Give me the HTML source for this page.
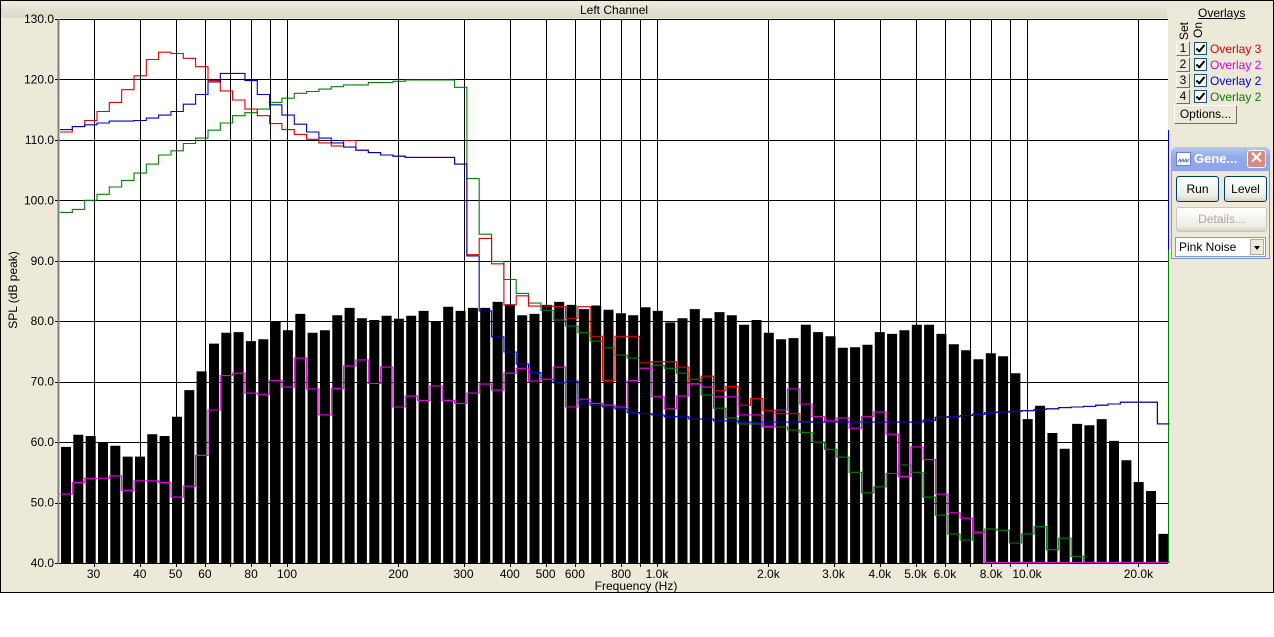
<!DOCTYPE html>
<html><head><meta charset="utf-8">
<style>
html,body{margin:0;padding:0;background:#fff;}
body{width:1274px;height:637px;position:relative;overflow:hidden;font-family:"Liberation Sans",sans-serif;}
#frame{position:absolute;left:0;top:0;width:1272px;height:591px;border:1px solid #000;background:#ECE9D8;}
.t{font-size:12px;fill:#000;font-family:"Liberation Sans",sans-serif;}
.abs{position:absolute;font-size:12px;color:#000;white-space:nowrap;}
.btn{position:absolute;box-sizing:border-box;border:1px solid #003C74;border-radius:3px;background:linear-gradient(#FFFFFF,#ECEBE6 80%,#D6D0C5);font-size:12px;text-align:center;}
.sb{position:absolute;box-sizing:border-box;width:14px;height:15px;border:1px solid;border-color:#fff #716F64 #716F64 #fff;background:#ECE9D8;font-size:12px;line-height:13px;text-align:center;}
.cb{position:absolute;box-sizing:border-box;width:13px;height:13px;border:1px solid #1C5180;background:#fff;}
.cb:after{content:"";position:absolute;left:3px;top:0px;width:3px;height:7px;border:solid #000;border-width:0 2px 2px 0;transform:rotate(40deg);}
</style></head><body>
<div id="frame"></div>
<div style="position:absolute;left:1px;top:1px;width:1166px;height:17px;background:linear-gradient(#EEEBDD,#DEDACA);"></div>
<div class="abs" style="left:580px;top:3px;">Left Channel</div>
<svg id="ch" width="1274" height="637" style="position:absolute;left:0;top:0;"></svg>

<div class="abs" style="left:1198px;top:6px;text-decoration:underline;">Overlays</div>
<div class="abs" style="left:1177px;top:40px;transform:rotate(-90deg);transform-origin:left top;">Set</div>
<div class="abs" style="left:1191px;top:38px;transform:rotate(-90deg);transform-origin:left top;">On</div>
<div class="sb" style="left:1176px;top:41px;">1</div><div class="cb" style="left:1194px;top:42px;"></div><div class="abs" style="left:1210px;top:42px;color:#E00000;">Overlay 3</div>
<div class="sb" style="left:1176px;top:57px;">2</div><div class="cb" style="left:1194px;top:58px;"></div><div class="abs" style="left:1210px;top:58px;color:#E000E0;">Overlay 2</div>
<div class="sb" style="left:1176px;top:73px;">3</div><div class="cb" style="left:1194px;top:74px;"></div><div class="abs" style="left:1210px;top:74px;color:#0000D0;">Overlay 2</div>
<div class="sb" style="left:1176px;top:89px;">4</div><div class="cb" style="left:1194px;top:90px;"></div><div class="abs" style="left:1210px;top:90px;color:#008000;">Overlay 2</div>
<div style="position:absolute;left:1174px;top:105px;width:63px;height:19px;box-sizing:border-box;border:1px solid;border-color:#fff #716F64 #716F64 #fff;font-size:12px;line-height:17px;text-align:center;">Options...</div>

<div style="position:absolute;left:1171px;top:147px;width:99px;height:112px;box-sizing:border-box;border:1px solid #7C93D8;border-top:none;border-radius:6px 6px 0 0;background:#ECE9D8;">
 <div style="position:absolute;left:-1px;top:0;width:99px;height:24px;border-radius:6px 6px 0 0;background:linear-gradient(#B7C7F4,#93ABEC 40%,#8CA4EA);"></div>
 <div style="position:absolute;left:4px;top:5px;width:13px;height:12px;background:#fff;border:1px solid #6A7FC0;"><svg width="13" height="12"><path d="M1 8 L3 5 L4 8 L6 5 L7 8 L9 5 L10 8 L12 5" stroke="#5070c0" fill="none"/></svg></div>
 <div style="position:absolute;left:22px;top:4px;color:#fff;font-size:13px;font-weight:bold;">Gene...</div>
 <div style="position:absolute;left:75px;top:3px;width:19px;height:18px;box-sizing:border-box;border:1px solid #fff;border-radius:3px;background:#D88C7C;color:#fff;font-size:16px;line-height:15px;text-align:center;font-weight:bold;">✕</div>
 <div class="btn" style="left:4px;top:29px;width:43px;height:26px;line-height:24px;">Run</div>
 <div class="btn" style="left:52px;top:29px;width:43px;height:26px;line-height:24px;">Level</div>
 <div class="btn" style="left:4px;top:60px;width:91px;height:25px;line-height:23px;color:#ACA899;border-color:#C9C7BA;">Details...</div>
 <div style="position:absolute;left:3px;top:90px;width:91px;height:20px;box-sizing:border-box;border:1px solid #7F9DB9;background:#fff;font-size:12px;line-height:18px;padding-left:3px;">Pink Noise<div style="position:absolute;right:1px;top:1px;width:14px;height:16px;background:#ECE9D8;border:1px solid #aaa;box-sizing:border-box;"><div style="position:absolute;left:3px;top:6px;border:3px solid transparent;border-top:4px solid #000;"></div></div></div>
</div>

<script>
const svg=document.getElementById('ch');
const NS='http://www.w3.org/2000/svg';
function el(n,a,txt){const e=document.createElementNS(NS,n);for(const k in a)e.setAttribute(k,a[k]);if(txt!=null)e.textContent=txt;svg.appendChild(e);return e;}
const X0=59,X1=1168,Y0=19,Y1=563;
const Y=v=>Y0+(130-v)*6.044;
const X=f=>287+370*(Math.log10(f)-2);
el('rect',{x:X0,y:Y0,width:X1-X0,height:Y1-Y0,fill:'#fff'});
const bars=[59.2,61.2,61,60,59.4,57.6,57.6,61.3,61,64.2,68.6,71.7,76.3,78.1,78.2,76.7,77,80,78.5,81.2,78.1,78.5,81,82.2,80.5,80.2,80.9,80.4,80.9,81.7,
80,82.4,81.7,82.2,82.2,83.2,82.8,81,81.2,82.7,83.2,82.7,82,82.6,81.9,81.3,81,82.3,81.7,79.8,80.5,82,80.5,81.5,81,79.4,80.2,78.1,77,77.2,79.4,
78.2,77.5,75.6,75.7,76.1,78.2,77.9,78.5,79.4,79.4,77.9,76.2,75.2,73.7,74.7,74.2,71.4,63.8,66,61.5,58.9,63,62.8,63.8,60.2,57,53.4,51.9,44.8];
const P=12.33;
let d='';
bars.forEach((v,i)=>{const x=61+i*P;d+=`M${x.toFixed(1)} ${Y(v).toFixed(1)}h10V${Y1}h-10z`;});
let g='';
[130,120,110,100,90,80,70,60,50,40].forEach(v=>{const y=Math.round(Y(v))+0.5;g+=`M${X0} ${y}H${X1}`;});
const fr=[30,40,50,60,70,80,90,100,200,300,400,500,600,700,800,900,1000,2000,3000,4000,5000,6000,7000,8000,9000,10000,20000];
fr.forEach(f=>{const x=Math.round(X(f))+0.5;g+=`M${x} ${Y0}V${Y1+4}`;});
el('path',{d:g,stroke:'#000','stroke-width':1,fill:'none'});
el('path',{d:d,fill:'#000'});
function step(arr,col){let s='';arr.forEach((v,i)=>{const xa=60+i*P,xb=xa+P,y=Math.min(Y(v),Y1-0.5).toFixed(1);s+=(i?'L':'M')+xa.toFixed(1)+' '+y+'L'+xb.toFixed(1)+' '+y;});el('path',{d:s,stroke:col,'stroke-width':1.1,fill:'none'});}
const rep=(v,n)=>Array(n).fill(v);
const mag=[51.4,53.3,54,54,54.4,52,53.6,53.6,53.3,50.9,52.7,57.8,65.3,71,71.4,68.1,67.9,70.2,69.1,73.9,68.8,64.5,68.9,72.6,73.6,69.7,72.4,65.8,67.6,66.9,
69.3,66.9,66.4,68.1,69.6,68.6,71.4,72.2,70.1,70.4,72.4,65.8,67.1,66.4,66.1,65.8,70.2,72.2,67.5,65.5,67.6,69.6,69.1,67.5,67.5,64.5,64.5,62.6,65.3,68.8,66.3,
64.2,63.5,64,62.3,64.2,65,61.3,54.3,59.2,57.1,51.4,48.3,47.4,45].concat(rep(40,15));
const grn=[98,98.5,100,101,102.2,103.3,104.5,106,107.5,108.2,109.4,110.3,111.6,112.8,114,114.5,115.1,
116.2,116.9,117.7,118,118.4,118.8,119.1,119.1,119.5,119.5,119.7,119.9,119.9,119.9,119.9,118.7,103.6,94.4,89.9,86.9,
84.6,83,81.8,80.2,79.2,78.1,76.7,75.6,74.4,73.9,72.2,72.7,72.2,71.4,70.4,67.8,65.6,64,63,63,62.5,62.5,62,61.6,
60,58.8,57.5,55,51.6,52.6,54.8,56.2,55,50.9,47.9,44.8,43.8,45.1,45.6,45.4,43.3,44.8,46,42.2,44.1,41.1].concat(rep(40,7));
const blu=[111.7,112.2,112.5,112.8,113.1,113.1,113.2,113.6,114.1,114.7,115.9,117.5,119.6,121,121,119.8,117.5,
115.8,114.1,112.6,111.3,110.3,109.5,108.8,108.3,107.9,107.5,107.3,107.1,107.1,107.1,107.1,106,90.8,
81.7,77.4,74.9,72.9,71.5,70.4,69.8,70.1,66.5,66.1,65.8,65.5,64.9,64.7,64.5,64.2,64.2,63.8,63.8,63.5,63.5]
.concat(rep(63.3,15)).concat([63.6,64.1,64.2,64.4,64.6,64.9,65,65.1,65.2,65.4,65.5,65.7,65.8,65.9,66.1,66.3,66.6,66.6,66.6,63]);
const red=[111.3,112.2,113.2,114.7,116.2,118.3,120.6,123.3,124.5,124.3,123.5,122.1,119.8,118.1,116.6,115.1,114,112.7,111.7,110.9,
110.1,109.5,109,109.9,108.3,107.9,107.5,107.3,107.1,107.1,107.1,107.1,106,91,93.7,89.5,
82.7,84.2,82.5,82.5,82.4,80.5,82.4,77.5,70.2,77.5,77.5,73.1,73.3,73.3,72.4,69.7,70.9,68.5,69.2,66.1,67.2,65.2,64.7,64.7,63.4].concat(blu.slice(61));
step(grn,'#008000');step(red,'#E00000');step(blu,'#0000C0');step(mag,'#E000E0');
el('path',{d:`M1168.5 130V250`,stroke:'#0000C0',fill:'none'});
el('path',{d:`M1168.5 250V563`,stroke:'#008000',fill:'none'});
el('path',{d:`M${X0} ${Y0+0.5}H${X1}`,stroke:'#000',fill:'none'});
el('path',{d:`M${X0-0.5} ${Y0}V${Y1+1}`,stroke:'#808080','stroke-width':2,fill:'none'});
el('path',{d:`M${X0} ${Y1+0.5}H${X1}`,stroke:'#000',fill:'none'});
[130,120,110,100,90,80,70,60,50,40].forEach(v=>{const y=Y(v);el('text',{x:54,y:(y+4).toFixed(1),'text-anchor':'end',class:'t'},v.toFixed(1));el('path',{d:`M55 ${Math.round(y)+0.5}h3`,stroke:'#000'});});
const lab=[[30,'30'],[40,'40'],[50,'50'],[60,'60'],[80,'80'],[100,'100'],[200,'200'],[300,'300'],[400,'400'],[500,'500'],[600,'600'],[800,'800'],[1000,'1.0k'],[2000,'2.0k'],[3000,'3.0k'],[4000,'4.0k'],[5000,'5.0k'],[6000,'6.0k'],[8000,'8.0k'],[10000,'10.0k'],[20000,'20.0k']];
lab.forEach(([f,t])=>el('text',{x:X(f).toFixed(1),y:578,'text-anchor':'middle',class:'t'},t));
el('text',{x:636,y:590,'text-anchor':'middle',class:'t'},'Frequency (Hz)');
el('text',{x:0,y:0,'text-anchor':'middle',class:'t',transform:'translate(17 290) rotate(-90)'},'SPL (dB peak)');
</script>
</body></html>
